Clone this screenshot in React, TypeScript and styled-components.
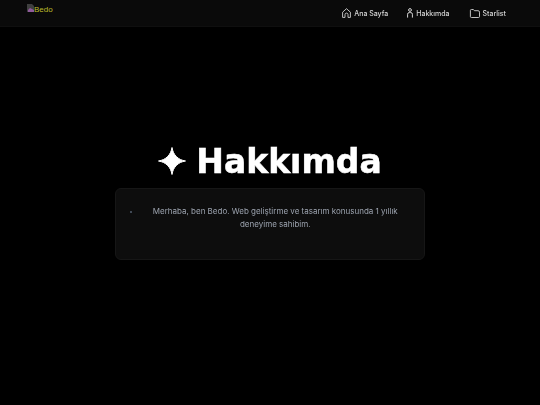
import styled, { createGlobalStyle } from "styled-components";

const GlobalStyle = createGlobalStyle`
  html, body {
    margin: 0;
    background: #000;
  }
  body {
    font-family: "Inter", "Noto Sans", sans-serif;
    overflow: hidden;
  }
`;

const Page = styled.div`
  width: 540px;
  height: 405px;
  display: flex;
  flex-direction: column;
  background: #000;
`;

const Header = styled.header`
  height: 26px;
  flex: none;
  display: flex;
  justify-content: space-between;
  padding: 0 34px 0 27px;
  background: #0a0a0a;
  border-bottom: 1px solid #0f0f0f;
`;

const Logo = styled.a`
  display: flex;
  align-items: flex-start;
  padding-top: 4px;
  height: 16px;
  color: #bcbc2c;
  font-family: "Liberation Sans", sans-serif;
  font-size: 8px;
  line-height: 11px;
`;

const BrokenImage = styled.svg`
  width: 7px;
  height: 8px;
  flex: none;
`;

const Nav = styled.nav`
  display: flex;
  align-items: center;
  gap: 19px;
  will-change: opacity;
`;

const NavLink = styled.a`
  display: flex;
  align-items: center;
  gap: 3px;
  color: #d4d4d4;
  font-size: 7px;
  font-weight: 500;
  svg {
    flex: none;
  }
`;

const Main = styled.main`
  flex: 1;
  display: flex;
  flex-direction: column;
  align-items: center;
  padding-top: 115px;
`;

const Title = styled.h1`
  margin: 0 0 6px;
  display: flex;
  align-items: center;
  gap: 10px;
  color: #fff;
  font-family: "DejaVu Sans", sans-serif;
  font-size: 33px;
  line-height: 40px;
  font-weight: 700;
  -webkit-text-stroke: 0.5px #fff;
  will-change: opacity;
`;

const Star = styled.svg`
  width: 28px;
  height: 28px;
  flex: none;
  margin-top: -2px;
`;

const Card = styled.section`
  width: 310px;
  height: 72px;
  box-sizing: border-box;
  display: flex;
  padding: 16px 14px 0;
  background: #0d0d0d;
  border: 1px solid #161616;
  border-radius: 6px;
`;

const Bullet = styled.span`
  width: 1.5px;
  height: 1.5px;
  margin-top: 6px;
  flex: none;
  background: #4b5563;
  border-radius: 50%;
`;

const Bio = styled.p`
  margin: 0;
  flex: 1;
  padding: 0 12px 0 21px;
  color: #9ca3af;
  font-size: 8px;
  line-height: 12.5px;
  text-align: center;
  will-change: opacity;
`;

export default function App() {
  return (
    <Page>
      <GlobalStyle />
      <Header>
        <Logo>
          <BrokenImage viewBox="0 0 7 8">
            <path d="M0 0h5l2 2v6H0z" fill="#3f3f3f" />
            <path d="M1 6l2-2 2 1 2 1v2H1z" fill="#8f5a9c" />
          </BrokenImage>
          Bedo
        </Logo>
        <Nav>
          <NavLink>
            <svg width="9" height="10" viewBox="0 0 9 10" fill="none" stroke="#d4d4d4" strokeWidth="0.9">
              <path d="M.6 9.4V4.2L4.5.7l3.9 3.5v5.2H6V6.6a1.5 1.5 0 0 0-3 0v2.8z" strokeLinejoin="round" />
            </svg>
            Ana Sayfa
          </NavLink>
          <NavLink>
            <svg width="6" height="10" viewBox="0 0 6 10" fill="none" stroke="#d4d4d4" strokeWidth="1">
              <circle cx="3" cy="2" r="1.4" />
              <path d="M.6 9.6V6.2A1.6 1.6 0 0 1 2.2 4.6h1.6a1.6 1.6 0 0 1 1.6 1.6v3.4" />
            </svg>
            Hakkımda
          </NavLink>
          <NavLink>
            <svg width="11" height="9" viewBox="0 0 11 9" fill="none" stroke="#d4d4d4" strokeWidth="0.9">
              <path d="M1.4 2V1.5a1 1 0 0 1 1-1h2l1 1.2h3.6a1.5 1.5 0 0 1 1.5 1.5v4.3a1 1 0 0 1-1 1H2.4a1 1 0 0 1-1-1z" strokeLinejoin="round" />
            </svg>
            Starlist
          </NavLink>
        </Nav>
      </Header>
      <Main>
        <Title>
          <Star viewBox="0 0 28 28">
            <path d="M14 0.5C15.2 8 20 12.8 27.5 14 20 15.2 15.2 20 14 27.5 12.8 20 8 15.2 0.5 14 8 12.8 12.8 8 14 0.5Z" fill="#fff" stroke="#fff" strokeWidth="1" strokeLinejoin="round" />
          </Star>
          Hakkımda
        </Title>
        <Card>
          <Bullet />
          <Bio>Merhaba, ben Bedo. Web geliştirme ve tasarım konusunda 1 yıllık deneyime sahibim.</Bio>
        </Card>
      </Main>
    </Page>
  );
}
